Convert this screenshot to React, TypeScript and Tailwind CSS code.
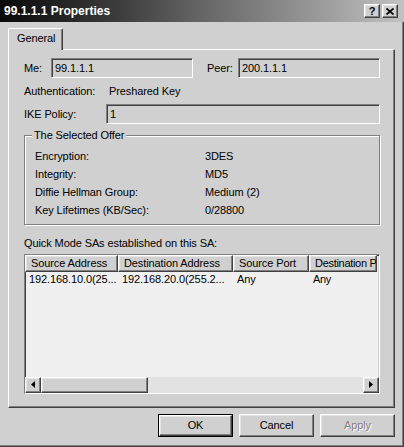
import React from 'react';

// classic win2k bevels, greyscale
const raised =
  'border border-t-white border-l-white border-r-[#404040] border-b-[#404040] shadow-[inset_-1px_-1px_0_#808080,inset_1px_1px_0_#e4e4e4]';
const sunken =
  'border border-t-[#808080] border-l-[#808080] border-r-white border-b-white shadow-[inset_1px_1px_0_#404040,inset_-1px_-1px_0_#d0d0d0]';

const offer = [
  { label: 'Encryption:', value: '3DES' },
  { label: 'Integrity:', value: 'MD5' },
  { label: 'Diffie Hellman Group:', value: 'Medium (2)' },
  { label: 'Key Lifetimes (KB/Sec):', value: '0/28800' },
];

const columns = [
  { title: 'Source Address', width: 'w-[93px]' },
  { title: 'Destination Address', width: 'w-[115px]' },
  { title: 'Source Port', width: 'w-[76px]' },
  { title: 'Destination P', width: 'w-[68px] tracking-[-0.3px]' },
];

const rows = [['192.168.10.0(25...', '192.168.20.0(255.2...', 'Any', 'Any']];

const Arrow: React.FC<{ dir: 'left' | 'right' }> = ({ dir }) => (
  <svg width="4" height="7" viewBox="0 0 4 7">
    {dir === 'left' ? <path d="M4 0 L0 3.5 L4 7 Z" fill="#000" /> : <path d="M0 0 L4 3.5 L0 7 Z" fill="#000" />}
  </svg>
);

const App: React.FC = () => {
  return (
    <div className="w-[404px] h-[447px] bg-[#d0d0d0] flex flex-col text-[11px] tracking-[-0.1px] text-black font-['Liberation_Sans',Arial,sans-serif] shadow-[inset_-1px_-1px_0_#404040,inset_-2px_-2px_0_#808080] overflow-hidden">
      {/* title bar */}
      <div className="h-[22px] shrink-0 flex items-center justify-between pl-[4px] pr-[6px] bg-linear-to-r from-[#0a0a0a] via-[#666666] to-[#c2c2c2]">
        <span className="text-white font-bold text-[12px] leading-none tracking-normal">99.1.1.1 Properties</span>
        <div className="flex gap-[2px]">
          <div className={`${raised} w-[16px] h-[14px] bg-[#d0d0d0] flex items-center justify-center font-bold text-[11px] leading-none`}>
            ?
          </div>
          <div className={`${raised} w-[16px] h-[14px] bg-[#d0d0d0] flex items-center justify-center`}>
            <svg width="8" height="7" viewBox="0 0 8 7">
              <path d="M0.5 0.5 L7.5 6.5 M7.5 0.5 L0.5 6.5" stroke="#000" strokeWidth="1.7" />
            </svg>
          </div>
        </div>
      </div>

      <div className="flex-1 flex flex-col pl-[8px] pr-[9px] pt-[6px]">
        {/* tab strip */}
        <div className="flex h-[22px] -mb-px relative z-10">
          <div className="w-[55px] h-[22px] bg-[#d0d0d0] border-t border-l border-r border-t-white border-l-white border-r-[#404040] rounded-t-[2px] shadow-[inset_-1px_0_0_#808080] flex items-center pl-[8px] pb-[2px]">
            General
          </div>
        </div>

        {/* tab panel */}
        <div className="h-[359px] border border-t-white border-l-white border-r-[#404040] border-b-[#404040] shadow-[inset_-1px_-1px_0_#808080] pl-[15px] pr-[13px] pt-[8px] flex flex-col">
          <div className="flex items-center h-[20px]">
            <span className="w-[27px]">Me:</span>
            <div className={`${sunken} w-[142px] h-[20px] flex items-center pl-[3px]`}>99.1.1.1</div>
            <span className="w-[31px] ml-[14px]">Peer:</span>
            <div className={`${sunken} w-[142px] h-[20px] flex items-center pl-[3px]`}>200.1.1.1</div>
          </div>

          <div className="flex items-center h-[18px] mt-[4px]">
            <span className="w-[85px]">Authentication:</span>
            <span>Preshared Key</span>
          </div>

          <div className="flex items-center h-[20px] mt-[4px]">
            <span className="w-[82px]">IKE Policy:</span>
            <div className={`${sunken} w-[274px] h-[20px] flex items-center pl-[3px]`}>1</div>
          </div>

          <fieldset className="w-[356px] mt-[3px] border border-[#808080] shadow-[inset_1px_1px_0_white,1px_1px_0_white] pl-[10px] pt-[4px] pb-[4px]">
            <legend className="-ml-[3px] px-[2px] bg-[#d0d0d0]">The Selected Offer</legend>
            {offer.map((o) => (
              <div key={o.label} className="flex items-center h-[18px]">
                <span className="w-[170px]">{o.label}</span>
                <span>{o.value}</span>
              </div>
            ))}
          </fieldset>

          <div className="h-[14px] mt-[12px] flex items-center">Quick Mode SAs established on this SA:</div>

          <div className={`${sunken} mt-[3px] w-[356px] h-[140px] bg-[#f0f0f0] flex flex-col overflow-hidden`}>
            <div className="flex h-[17px] shrink-0 whitespace-nowrap">
              {columns.map((c) => (
                <div key={c.title} className={`${raised} ${c.width} shrink-0 bg-[#d0d0d0] flex items-center pl-[5px] overflow-hidden`}>
                  {c.title}
                </div>
              ))}
            </div>
            <div className="flex-1">
              {rows.map((r, i) => (
                <div key={i} className="flex h-[16px] items-center whitespace-nowrap">
                  {r.map((cell, j) => (
                    <div key={j} className={`${columns[j].width} shrink-0 pl-[4px] overflow-hidden`}>
                      {cell}
                    </div>
                  ))}
                </div>
              ))}
            </div>
            <div className="flex h-[16px] shrink-0">
              <div className={`${raised} w-[16px] bg-[#d0d0d0] flex items-center justify-center`}>
                <Arrow dir="left" />
              </div>
              <div className={`${raised} w-[107px] bg-[#d0d0d0]`} />
              <div className="flex-1 bg-[#e2e2e2]" />
              <div className={`${raised} w-[16px] bg-[#d0d0d0] flex items-center justify-center`}>
                <Arrow dir="right" />
              </div>
            </div>
          </div>
        </div>

        {/* dialog buttons */}
        <div className="flex justify-end gap-[6px] mt-[6px]">
          <div className="w-[75px] h-[23px] border border-black">
            <div className={`${raised} w-full h-full bg-[#d0d0d0] flex items-center justify-center`}>OK</div>
          </div>
          <div className={`${raised} w-[75px] h-[23px] bg-[#d0d0d0] flex items-center justify-center`}>Cancel</div>
          <div className={`${raised} w-[75px] h-[23px] bg-[#d0d0d0] flex items-center justify-center text-[#808080] [text-shadow:1px_1px_0_white]`}>
            Apply
          </div>
        </div>
      </div>
    </div>
  );
};

export default App;
